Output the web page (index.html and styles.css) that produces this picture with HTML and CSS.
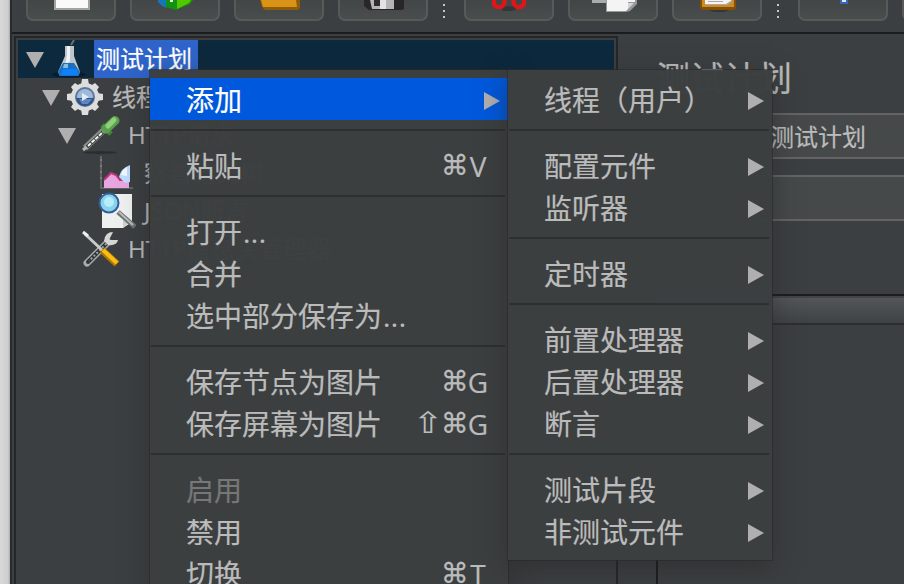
FILE: index.html
```html
<!DOCTYPE html>
<html lang="zh-CN">
<head>
<meta charset="utf-8">
<title>测试计划</title>
<link rel="stylesheet" href="styles.css">
</head>
<body>
<div class="desktop">
  <div class="window">
    <div class="toolbar">
      <div class="tool"><svg viewBox="2 0 86 19"><path fill="#a3a3a0" d="M28 0h36v10H28z"/><path fill="#fafafa" d="M30 0h32v8H30z"/></svg></div>
      <div class="tool"><svg viewBox="2 0 86 19"><path fill="#1676b9" d="M28 0h9v8l-5-2-4-4z"/><path fill="#12930f" d="M36 0h27l-3 4-14 6-10-3z"/><path fill="#51c800" d="M47 0h14l-2 3-12 6z"/><path fill="#e9f7e5" d="M40 0h3v2h-3z"/></svg></div>
      <div class="tool"><svg viewBox="2 0 86 19"><path fill="#8e5b08" d="M26 0h40v8l-2 2H31l-3-3z"/><path fill="#d99316" d="M27 0h35l1 7H29z"/></svg></div>
      <div class="tool"><svg viewBox="2 0 86 19"><path fill="#292627" d="M26 0h40v9l-2 1H31l-5-4z"/><path fill="#b4b4b4" d="M32 0h24v9H34z"/><path fill="#e3e3e3" d="M42 0h6v9h-6z"/><path fill="#302c2e" d="M36 0h6v6h-6z"/></svg></div>
      <div class="grip"><i></i><i></i><i></i></div>
      <div class="tool"><svg viewBox="2 0 86 19"><path fill="#333738" d="M34 8l11-2 11 2-8 3h-8z"/><g fill="none" stroke="#e01519" stroke-width="4"><path d="M30 -1v5q2 4 7 3 5-3 3-8"/><path d="M60 -1v5q-2 4-7 3-5-3-3-8"/></g></svg></div>
      <div class="tool"><svg viewBox="2 0 86 19"><path fill="#a9acac" d="M24 0h24v3H24z"/><path fill="#969999" d="M38 0h31v4l-7 7-4 1H38z"/><path fill="#f4f4f4" d="M39 0h28v2h-7v7l-2 2H39z"/><path fill="#d5d5d5" d="M60 3h6l-6 6z"/></svg></div>
      <div class="tool"><svg viewBox="2 0 86 19"><path fill="#333738" d="M34 9h26l-8 3H42z"/><path fill="#855004" d="M28 0h36v8l-2 2H30l-2-2z"/><path fill="#cf8b25" d="M30 0h32v7H30z"/><path fill="#f4f4f3" d="M33 0h27l-6 5H33z"/><path fill="#aaa" d="M36 1h15v1H36zM33 4h21l6-4v2l-5 3H33z"/></svg></div>
      <div class="grip"><i></i><i></i><i></i></div>
      <div class="tool"><svg viewBox="2 0 86 19"><path fill="#3868b4" d="M42 0h8v4h-8z"/><path fill="#dce8fa" d="M44 0h4v2h-4z"/></svg></div>
      <div class="tool"></div>
    </div>
    <div class="workspace">
      <div class="tree">
        <div class="node selected l0"><b class="caret"></b>
          <svg class="icon" viewBox="0 0 38 38"><ellipse cx="19" cy="34.500" rx="17" ry="3" fill="#071c2c"/><path d="M21 5l3-5" stroke="#65717a" stroke-width="2"/><path fill="#bec5cb" d="M15 6h9v10l6 16-2 4H10l-2-4 7-16z"/><path fill="#f1f2f3" d="M17 6h3v15l-5 5 2-11z"/><path fill="#1c70bd" d="M13 23h11l6 9-2 4H10l-2-4z"/><path fill="#0b82fc" d="M13 29h14l1 6H11z"/><path fill="#89bce4" d="M14 24h4v4h-5z"/></svg>
          <span class="label">测试计划</span></div>
        <div class="node l1"><b class="caret"></b>
          <svg class="icon" viewBox="0 0 38 38"><g fill="#dcdddd"><path d="M16 1h6l1 6h-8zM16 37h6l1-6h-8zM1 16v6l6 1v-8zM37 16v6l-6 1v-8z"/><path d="M5 9l4-4 6 4-6 6zM29 5l4 4-4 6-6-6zM5 29l4 4 6-4-6-6zM33 29l-4 4-6-4 6-6z"/><circle cx="19" cy="19" r="14"/></g><circle cx="19" cy="19" r="10" fill="#5f7699"/><circle cx="19" cy="19" r="8" fill="#9fb9da"/><path fill="#315383" d="M10 20h18q-2 8-9 8t-9-8z"/><path fill="#5b88bf" d="M13 21h13l-4 5h-6z"/><path fill="#e3ebf5" d="M16 15l7 4-7 4z"/></svg>
          <span class="label">线程组</span></div>
        <div class="node l2"><b class="caret"></b>
          <svg class="icon" viewBox="0 0 38 38"><ellipse cx="18" cy="36.500" rx="17" ry="1.500" fill="#2b2e30"/><path d="M3 32L23 13" stroke="#8d918e" stroke-width="6"/><path d="M1 34l5-4" stroke="#b4b7b4" stroke-width="3"/><path d="M5 31L23 14" stroke="#343836" stroke-width="3.500"/><path d="M6 30L22 15" stroke="#f0f2ef" stroke-width="2" stroke-dasharray="4 1"/><path d="M20 9l9 9" stroke="#3f8735" stroke-width="5"/><path d="M24 13L33 4.500" stroke="#5a9f4d" stroke-width="9" stroke-linecap="round"/><path d="M26 10l6-6" stroke="#8fd07c" stroke-width="5" stroke-linecap="round"/></svg>
          <span class="label">HTTP请求</span></div>
        <div class="node leaf l3">
          <svg class="icon" viewBox="0 0 38 38"><path d="M3 2v32h32" fill="none" stroke="#606366" stroke-width="2"/><path d="M2 6h2m-2 6h2m-2 6h2m-2 6h2" stroke="#929598"/><path fill="#e9a5df" d="M6 34V26l7-7 5 2 4 5h5l4-3v11z"/><path d="M6 26l7-7 5 2 4 5h5l4-3" fill="none" stroke="#bd3679" stroke-width="2"/><path fill="#bddcff" d="M32 11v17l-5 1-6-6q2-9 11-12z"/><path fill="#f3f8ff" d="M25 16l4-3v9l-6-1z"/></svg>
          <span class="label">察看结果树</span></div>
        <div class="node leaf l3">
          <svg class="icon" viewBox="0 0 38 38"><path fill="#eeefef" d="M4 2h30v28l-9 6H4z"/><path fill="#ccd0d0" d="M25 36v-8h8z"/><path d="M20 20l17 15" stroke="#6e7476" stroke-width="5"/><path d="M21 20l14 13" stroke="#b9bebd" stroke-width="2"/><circle cx="11" cy="11" r="9.500" fill="#8bd2ed" stroke="#315f9c" stroke-width="2"/><circle cx="11" cy="10" r="5" fill="#b6edfa"/></svg>
          <span class="label">JSON断言</span></div>
        <div class="node leaf l2">
          <svg class="icon" viewBox="0 0 38 38"><path d="M5 33L26 12" stroke="#a8acac" stroke-width="7" stroke-linecap="round"/><path d="M6 32L26 12" stroke="#303536" stroke-width="4"/><path d="M6 32L26 12" stroke="#9c9f9e" stroke-width="2" stroke-dasharray="2 2"/><circle cx="6" cy="32" r="2" fill="#303536"/><path d="M31 2l-4 8h9q-1 6-10 5l-4-4q1-9 9-9z" fill="#d4d7d5"/><path d="M3 4l18 17" stroke="#c8cbca" stroke-width="3"/><path d="M1 2l5 4" stroke="#edf0ef" stroke-width="3"/><path d="M20 20l15 14" stroke="#b27800" stroke-width="7"/><path d="M21 20l14 13" stroke="#f7be16" stroke-width="4"/></svg>
          <span class="label">HTTP信息头管理器</span></div>
      </div>
      <div class="divider"></div>
      <main class="editor">
        <h1>测试计划</h1>
        <div class="field name">测试计划</div>
        <div class="field note"></div>
        <section class="table"><div class="table-head"></div></section>
      </main>
    </div>
  </div>
</div>

<div class="menu context">
  <div class="item active">添加<b class="arrow"></b></div>
  <hr>
  <div class="item">粘贴<span class="keys"><i>⌘</i><em>V</em></span></div>
  <hr>
  <div class="item">打开<span class="dots">...</span></div>
  <div class="item">合并</div>
  <div class="item">选中部分保存为<span class="dots">...</span></div>
  <hr>
  <div class="item">保存节点为图片<span class="keys"><i>⌘</i><em>G</em></span></div>
  <div class="item">保存屏幕为图片<span class="keys"><i class="shift">⇧</i><i>⌘</i><em>G</em></span></div>
  <hr>
  <div class="item disabled">启用</div>
  <div class="item">禁用</div>
  <div class="item">切换<span class="keys"><i>⌘</i><em>T</em></span></div>
</div>
<div class="menu submenu">
  <div class="item">线程（用户）<b class="arrow"></b></div>
  <hr>
  <div class="item">配置元件<b class="arrow"></b></div>
  <div class="item">监听器<b class="arrow"></b></div>
  <hr>
  <div class="item">定时器<b class="arrow"></b></div>
  <hr>
  <div class="item">前置处理器<b class="arrow"></b></div>
  <div class="item">后置处理器<b class="arrow"></b></div>
  <div class="item">断言<b class="arrow"></b></div>
  <hr>
  <div class="item">测试片段<b class="arrow"></b></div>
  <div class="item">非测试元件<b class="arrow"></b></div>
</div>
</body>
</html>
```

FILE: styles.css
```css
* { box-sizing: border-box; }

body {
  margin: 0;
  height: 584px;
  overflow: hidden;
  position: relative;
  background: #3c3f41;
  color: #bbb;
  font-family: "Open Sans", "Noto Sans CJK SC", sans-serif;
  -webkit-text-stroke: .2px;
}

.desktop {
  height: 584px;
  padding-left: 10px;
  background: linear-gradient(90deg, #d9d9d9 0, #cecece 8px, #aaa 10px);
}

.window {
  height: 584px;
  border-left: 2px solid #292b2c;
  background: #3c3f41;
  overflow: hidden;
}

/* toolbar */
.toolbar {
  display: flex;
  align-items: flex-start;
  gap: 14px;
  height: 34px;
  padding-left: 14px;
  border-bottom: 2px solid #1b1c1e;
}

.tool {
  flex: 0 0 90px;
  height: 21px;
  border: 2px solid #575a59;
  border-top: 0;
  border-radius: 0 0 7px 7px;
  background: linear-gradient(#424647, #494d4e);
}

.tool svg { display: block; width: 86px; height: 19px; }

.grip {
  flex: 0 0 8px;
  display: flex;
  flex-direction: column;
  align-items: center;
  gap: 4px;
  padding: 4px 4px 0 0;
}

.grip i { width: 2px; height: 2px; background: #c5c6c6; }

/* main area */
.workspace { display: flex; height: 550px; padding-left: 2px; }

.tree {
  flex: 0 0 604px;
  margin-top: 2px;
  padding: 2px 2px 0;
  border: 2px solid #242628;
  border-bottom: 0;
  overflow: hidden;
}

.node { display: flex; align-items: center; height: 38px; }
.node.selected { background: #0d293e; }
.l0 { padding-left: 8px; }
.l1 { padding-left: 24px; }
.l2 { padding-left: 40px; }
.leaf.l2 { padding-left: 64px; }
.leaf.l3 { padding-left: 80px; }

.caret {
  flex: none;
  width: 18px;
  height: 16px;
  margin: 2px 6px 0 0;
  background: #afafaf;
  clip-path: polygon(0 0, 100% 0, 50% 100%);
}

.icon { flex: none; width: 38px; height: 38px; }

.label {
  flex: none;
  height: 38px;
  margin-left: 6px;
  padding: 0 6px 0 2px;
  font-size: 24px;
  line-height: 38px;
  white-space: nowrap;
}

.selected .label { background: #2f65ca; color: #fff; }

.divider { flex: 0 0 38px; }

.editor { flex: 1; min-width: 0; }

h1 {
  height: 79px;
  margin: 0;
  font-size: 34px;
  font-weight: 400;
  line-height: 88px;
}

.field {
  height: 46px;
  border: solid #646464;
  border-width: 2px 0;
  background: #45494a;
}

.name {
  margin: 0 0 16px 100px;
  padding-left: 14px;
  font-size: 24px;
  line-height: 43px;
}

.note { margin-left: 100px; }

.table {
  height: 300px;
  margin-top: 73px;
  border: solid #1c1d1f;
  border-width: 2px 0 0 2px;
}

.table-head {
  height: 29px;
  border-top: 2px solid #424446;
  border-bottom: 2px solid #2c2e30;
  background: linear-gradient(#525659, #3f4244);
}

/* popup menus */
.menu {
  position: absolute;
  top: 70px;
  padding: 8px 0;
  background: rgba(60, 63, 65, .992);
  box-shadow: 0 0 0 1px rgba(40, 41, 42, .6), 0 8px 24px rgba(35, 35, 35, .5);
}

.context { left: 150px; width: 358px; height: 530px; }
.submenu { left: 508px; width: 264px; height: 490px; }

.item {
  display: flex;
  align-items: center;
  height: 42px;
  padding: 2px 20px 0 36px;
  font-size: 28px;
  line-height: 40px;
  white-space: nowrap;
}

.submenu .item, .item.active { padding-right: 8px; }
.item.active { background: #0058dc; color: #fff; }
.item.disabled { color: #777; }

.menu hr {
  height: 2px;
  margin: 9px 3px 13px 1px;
  border: 0;
  background: #2e2f30;
}

.arrow {
  width: 16px;
  height: 18px;
  margin: 2px 0 0 auto;
  background: #afafaf;
  clip-path: polygon(0 0, 100% 50%, 0 100%);
}

.dots { margin-left: 1px; letter-spacing: .5px; }

.keys { display: flex; margin-left: auto; }

.keys i {
  width: 26px;
  font-family: "DejaVu Sans", sans-serif;
  font-size: 28px;
  font-style: normal;
  display: flex;
  justify-content: center;
}

.keys em {
  width: 20px;
  font-style: normal;
  display: flex;
  justify-content: center;
}

.keys .shift {
  width: 28px;
  transform: scale(1.35, 1.05);
  -webkit-text-stroke: 0;
}
```
